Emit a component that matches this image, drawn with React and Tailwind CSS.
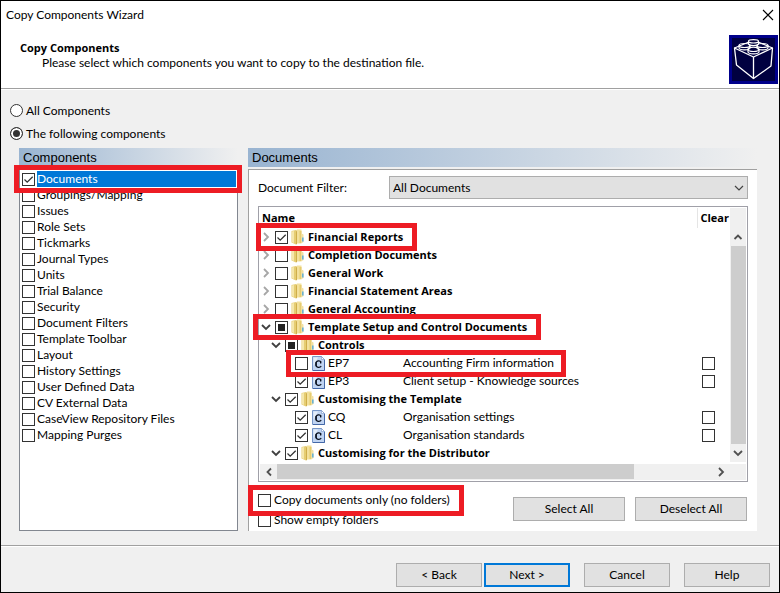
import React from 'react';
import clsx from 'clsx';

const COMPONENTS = [
    'Documents', 'Groupings/Mapping', 'Issues', 'Role Sets', 'Tickmarks', 'Journal Types',
    'Units', 'Trial Balance', 'Security', 'Document Filters', 'Template Toolbar', 'Layout',
    'History Settings', 'User Defined Data', 'CV External Data', 'CaseView Repository Files',
    'Mapping Purges',
];

const ROWS = [
    { type: 'folder', level: 0, name: 'Financial Reports', state: 'on', mark: '-left-1 -top-[5px] h-7 w-[161px]' },
    { type: 'folder', level: 0, name: 'Completion Documents' },
    { type: 'folder', level: 0, name: 'General Work' },
    { type: 'folder', level: 0, name: 'Financial Statement Areas' },
    { type: 'folder', level: 0, name: 'General Accounting' },
    { type: 'folder', level: 0, name: 'Template Setup and Control Documents', state: 'mixed', open: true, mark: '-left-[7px] -top-1 h-[26px] w-[288px]' },
    { type: 'folder', level: 1, name: 'Controls', state: 'mixed', open: true },
    { type: 'doc', name: 'EP7', title: 'Accounting Firm information', mark: 'left-[26px] -top-1 h-[27px] w-[280px]' },
    { type: 'doc', name: 'EP3', title: 'Client setup - Knowledge sources', state: 'on' },
    { type: 'folder', level: 1, name: 'Customising the Template', state: 'on', open: true },
    { type: 'doc', name: 'CQ', title: 'Organisation settings', state: 'on' },
    { type: 'doc', name: 'CL', title: 'Organisation standards', state: 'on' },
    { type: 'folder', level: 1, name: 'Customising for the Distributor', state: 'on', open: true },
];

const Mark = ({ className }) => (
    <span className={clsx('pointer-events-none absolute z-10 border-[5px] border-[#ed1c24]', className)} />
);

const CheckBox = ({ state, ...props }) => (
    <span className="relative block h-[13px] w-[13px] shrink-0">
        <input
            type="checkbox"
            defaultChecked={state === 'on'}
            ref={(el) => {
                if (el && state === 'mixed') el.indeterminate = true;
            }}
            className="peer block h-[13px] w-[13px] appearance-none border border-[#333] bg-white"
            {...props}
        />
        <svg viewBox="0 0 13 13" className="pointer-events-none absolute inset-0 hidden h-[13px] w-[13px] peer-checked:block">
            <path d="M2.5 6.5 L5.2 9.2 L10.7 3.7" fill="none" stroke="#333" strokeWidth="1.3" />
        </svg>
        <span className="pointer-events-none absolute inset-[3px] hidden bg-[#222] peer-indeterminate:block" />
    </span>
);

const Chevron = ({ dir, className }) => {
    const paths = {
        down: 'M1 3 L5 7 L9 3',
        up: 'M1.5 7 L5 3.5 L8.5 7',
        left: 'M7 1.5 L3.5 5 L7 8.5',
        right: 'M3 1 L7 5 L3 9',
    };
    return (
        <svg viewBox="0 0 10 10" className={clsx('h-[10px] w-[10px] shrink-0', className)} aria-hidden="true">
            <path d={paths[dir]} fill="none" stroke="currentColor" strokeWidth="1.8" />
        </svg>
    );
};

const FolderIcon = () => (
    <svg viewBox="0 0 13 16" className="h-4 w-[13px] shrink-0" aria-hidden="true">
        <path d="M0.5 2 L5 1 L5 15.5 L0.5 13.5 Z" fill="#e6cd72" />
        <path d="M1 2.5 L3 2 V14 L1 13.3 Z" fill="#f5e7ac" />
        <path d="M5 2.5 L6 0.5 H10.5 V14.5 H5 Z" fill="#f3e19c" />
        <path d="M5 2.5 L6 1 V15 L5 15.5 Z" fill="#cfae4b" />
        <path d="M8.5 2 H10.5 V14 H8.5 Z" fill="#e6cc70" />
        <path d="M10.5 4.5 L12.5 5.5 V13 L10.5 14.2 Z" fill="#f1dfa0" />
        <path d="M11.2 8.5 H12.5 V12.5 H11.2 Z" fill="#49a5dd" />
    </svg>
);

const DocIcon = () => (
    <svg viewBox="0 0 13 15" className="h-[15px] w-[13px] shrink-0" aria-hidden="true">
        <path d="M0.5 0.5 H9.5 L12.5 3.5 V14.5 H0.5 Z" fill="#c0d4f2" stroke="#7796c8" />
        <path d="M1 14.5 H12.5 V4" fill="none" stroke="#4468a8" />
        <path d="M1.5 1.5 H6 L1.5 10 Z" fill="#e4edfa" />
        <path d="M9.5 0.5 V3.5 H12.5 Z" fill="#fff" stroke="#7796c8" strokeWidth="0.6" />
        <path d="M9 6.3 C8.4 4.3 3.8 4 3.8 8 C3.8 12.2 8.2 12 9.2 10" fill="none" stroke="#0b1220" strokeWidth="1.2" />
        <path d="M4.2 6 V10.2" stroke="#0b1220" strokeWidth="1.3" />
        <path d="M8 5.2 H9.3 V7.4 H8 Z" fill="#0b1220" />
    </svg>
);

const BrickLogo = () => (
    <svg viewBox="0 0 49 49" className="h-[49px] w-[49px] shrink-0" aria-hidden="true">
        <rect width="49" height="49" fill="#00008b" />
        <rect x="3" y="3" width="43" height="43" fill="#000040" />
        <g fill="none" stroke="#fff" strokeWidth="1.3" strokeLinejoin="round">
            <path d="M5.5 13 L24.5 22 L43.5 13 L42 31 L24.5 43.5 L7.5 30 Z" />
            <path d="M24.5 22 V43.5" />
            <path d="M5.5 13 L20 7 M43.5 13 L29 7" />
            <g strokeWidth="1.2">
                <path d="M19.5 6.5 V9 C20 11 29 11 29.5 9 V6.5" />
                <ellipse cx="24.5" cy="6.3" rx="5" ry="1.7" />
                <path d="M10 10.5 V13 C10.5 15.5 20.5 15.5 21 13 V10.5" />
                <ellipse cx="15.5" cy="10.5" rx="5.5" ry="2" />
                <path d="M28 10.5 V13 C28.5 15.5 38.5 15.5 39 13 V10.5" />
                <ellipse cx="33.5" cy="10.5" rx="5.5" ry="2" />
                <path d="M19 14.5 V17 C19.5 19.5 29.5 19.5 30 17 V14.5" />
                <ellipse cx="24.5" cy="14.3" rx="5.5" ry="2.2" />
            </g>
        </g>
    </svg>
);

const Button = ({ primary, className, children }) => (
    <button
        type="button"
        className={clsx(
            'h-6 bg-[#e1e1e1] text-center leading-4',
            primary ? 'border-2 border-[#0078d7]' : 'border border-[#adadad]',
            className
        )}
    >
        {children}
    </button>
);

const PaneTitle = ({ children }) => (
    <h2 className="mb-0.5 h-[19px] bg-linear-to-r from-[#99b4d1] to-[#f0f0f0] pl-1 font-['Liberation_Sans',Arial,sans-serif] text-[13px] leading-[19px]">
        {children}
    </h2>
);

const Radio = ({ label, checked }) => (
    <label className="flex h-[23px] items-center gap-[3px]">
        <input
            type="radio"
            name="scope"
            defaultChecked={checked}
            className="h-[13px] w-[13px] appearance-none rounded-full border border-[#333] bg-white checked:bg-[#333] checked:shadow-[inset_0_0_0_2px_#fff]"
        />
        {label}
    </label>
);

const TreeRow = ({ row }) => {
    if (row.type === 'folder') {
        return (
            <tr className="h-[18px]">
                <td colSpan={3} className="relative p-0">
                    <div className={clsx('flex h-[18px] items-center', row.level === 0 ? 'pl-px' : 'pl-[11px]')}>
                        <button type="button" aria-label={`Toggle ${row.name}`} className="mr-1 shrink-0">
                            <Chevron dir={row.open ? 'down' : 'right'} className={row.open ? 'text-[#404040]' : 'text-[#a6a6a6]'} />
                        </button>
                        <CheckBox state={row.state} aria-label={row.name} />
                        <span className="ml-[3px] mr-1"><FolderIcon /></span>
                        <span className="whitespace-nowrap font-['Open_Sans','Noto_Sans',sans-serif] text-[11px] font-bold leading-[18px]">{row.name}</span>
                    </div>
                    {row.mark && <Mark className={row.mark} />}
                </td>
            </tr>
        );
    }

    return (
        <tr className="h-[18px]">
            <td className="relative p-0">
                <div className="flex h-[18px] items-center pl-[35px]">
                    <CheckBox state={row.state} aria-label={row.name} />
                    <span className="ml-1 mr-[3px]"><DocIcon /></span>
                    {row.name}
                </div>
                {row.mark && <Mark className={row.mark} />}
            </td>
            <td className="whitespace-nowrap p-0">{row.title}</td>
            <td className="p-0 pl-[5px]">
                <CheckBox aria-label={`Clear ${row.name}`} />
            </td>
        </tr>
    );
};

const DocumentTree = () => (
    <div className="mt-[7px] border border-[#a0a0a8] bg-white p-px">
        <div className="flex">
            <table className="min-w-0 flex-1 table-fixed border-collapse">
                <colgroup>
                    <col className="w-[143px]" />
                    <col />
                    <col className="w-[33px]" />
                </colgroup>
                <thead>
                    <tr className="h-5 text-left font-['Open_Sans','Noto_Sans',sans-serif] text-[11px] font-bold">
                        <th colSpan={2} className="p-0 pl-0.5">Name</th>
                        <th className="border-l border-[#e5e5e5] p-0 pl-[3px]">Clear</th>
                    </tr>
                </thead>
                <tbody>
                    {ROWS.map((row) => <TreeRow key={row.name} row={row} />)}
                </tbody>
            </table>
            <div className="flex w-4 flex-col items-center bg-[#f0f0f0] pt-5 text-[#505050]">
                <span className="flex h-[18px] items-center"><Chevron dir="up" /></span>
                <span className="w-[15px] flex-1 bg-[#cdcdcd]" />
                <span className="flex h-[18px] items-center"><Chevron dir="down" /></span>
            </div>
        </div>
        <div className="mt-0.5 flex h-4 items-stretch bg-[#f0f0f0] pr-[17px] text-[#505050]">
            <span className="flex w-[17px] items-center justify-center"><Chevron dir="left" /></span>
            <div className="flex-1">
                <div className="h-[15px] w-[82%] bg-[#cdcdcd]" />
            </div>
            <span className="flex w-[17px] items-center justify-center"><Chevron dir="right" /></span>
        </div>
    </div>
);

const App = () => (
    <div className="flex min-h-screen flex-col border border-black bg-[#f0f0f0] font-['Lato','Noto_Sans',sans-serif] text-xs leading-4 text-black">
        <header className="border-b border-[#a0a0a0] bg-white">
            <div className="flex h-[28px] items-center justify-between pl-[5px] pr-[5px]">
                <span>Copy Components Wizard</span>
                <button type="button" aria-label="Close">
                    <svg viewBox="0 0 12 12" className="h-3 w-3">
                        <path d="M1 1 L11 11 M11 1 L1 11" stroke="#000" strokeWidth="1.1" />
                    </svg>
                </button>
            </div>
            <div className="flex justify-between pb-1 pl-[19px] pr-px pt-[6px]">
                <div className="pt-[5px]">
                    <h1 className="font-['Open_Sans','Noto_Sans',sans-serif] text-[11px] font-bold leading-[15px]">Copy Components</h1>
                    <p className="pl-[22px] leading-[15px]">Please select which components you want to copy to the destination file.</p>
                </div>
                <BrickLogo />
            </div>
        </header>

        <main className="flex-1 border-t border-white pl-[9px] pr-[22px] pt-[9px]">
            <Radio label="All Components" />
            <Radio label="The following components" checked />

            <div className="mt-[3px] grid grid-cols-[219fr_509fr] gap-[10px] pl-[9px]">
                <section className="flex flex-col">
                    <PaneTitle>Components</PaneTitle>
                    <ul className="flex-1 border border-[#828790] bg-white p-px">
                        {COMPONENTS.map((name, i) => (
                            <li key={name} className="relative">
                                <label className="flex h-4 items-center pl-px">
                                    <CheckBox state={i === 0 ? 'on' : undefined} />
                                    <span className={clsx('ml-0.5 flex-1', i === 0 && 'bg-[#0078d7] text-white')}>{name}</span>
                                </label>
                                {i === 0 && <Mark className="-left-[7px] -right-[6px] -top-[6px] h-7" />}
                            </li>
                        ))}
                    </ul>
                </section>

                <section>
                    <PaneTitle>Documents</PaneTitle>
                    <div className="border-l border-t border-[#a0a0a0] bg-white pb-px pl-[9px] pr-[9px] pt-[6px]">
                        <div className="flex items-center">
                            <label htmlFor="filter" className="w-[131px] shrink-0">Document Filter:</label>
                            <div className="relative flex-1">
                                <select id="filter" className="block h-[23px] w-full appearance-none border border-[#adadad] bg-[#e1e1e1] pl-[3px]">
                                    <option>All Documents</option>
                                </select>
                                <svg viewBox="0 0 10 6" className="pointer-events-none absolute right-1 top-[9px] h-[6px] w-[10px]">
                                    <path d="M1 1 L5 5 L9 1" fill="none" stroke="#444" strokeWidth="1.2" />
                                </svg>
                            </div>
                        </div>

                        <DocumentTree />

                        <div className="mt-2 flex items-start justify-between">
                            <div>
                                <label className="relative flex h-5 items-center gap-[3px]">
                                    <CheckBox />
                                    Copy documents only (no folders)
                                    <Mark className="-left-[10px] -top-[5px] h-[31px] w-[216px]" />
                                </label>
                                <label className="flex h-5 items-center gap-[3px]">
                                    <CheckBox />
                                    Show empty folders
                                </label>
                            </div>
                            <div className="flex gap-[10px] pt-[7px] pr-px">
                                <Button className="w-28">Select All</Button>
                                <Button className="w-28">Deselect All</Button>
                            </div>
                        </div>
                    </div>
                </section>
            </div>
        </main>

        <footer className="mt-[14px] flex justify-end border-t border-[#a0a0a0] pb-[5px] pr-[9px] shadow-[inset_0_1px_0_#fff] pt-[17px]">
            <Button className="w-[86px]">&lt; Back</Button>
            <Button className="ml-0.5 w-[86px]" primary>Next &gt;</Button>
            <Button className="ml-[14px] w-[86px]">Cancel</Button>
            <Button className="ml-[14px] w-[86px]">Help</Button>
        </footer>
    </div>
);

export default App;
